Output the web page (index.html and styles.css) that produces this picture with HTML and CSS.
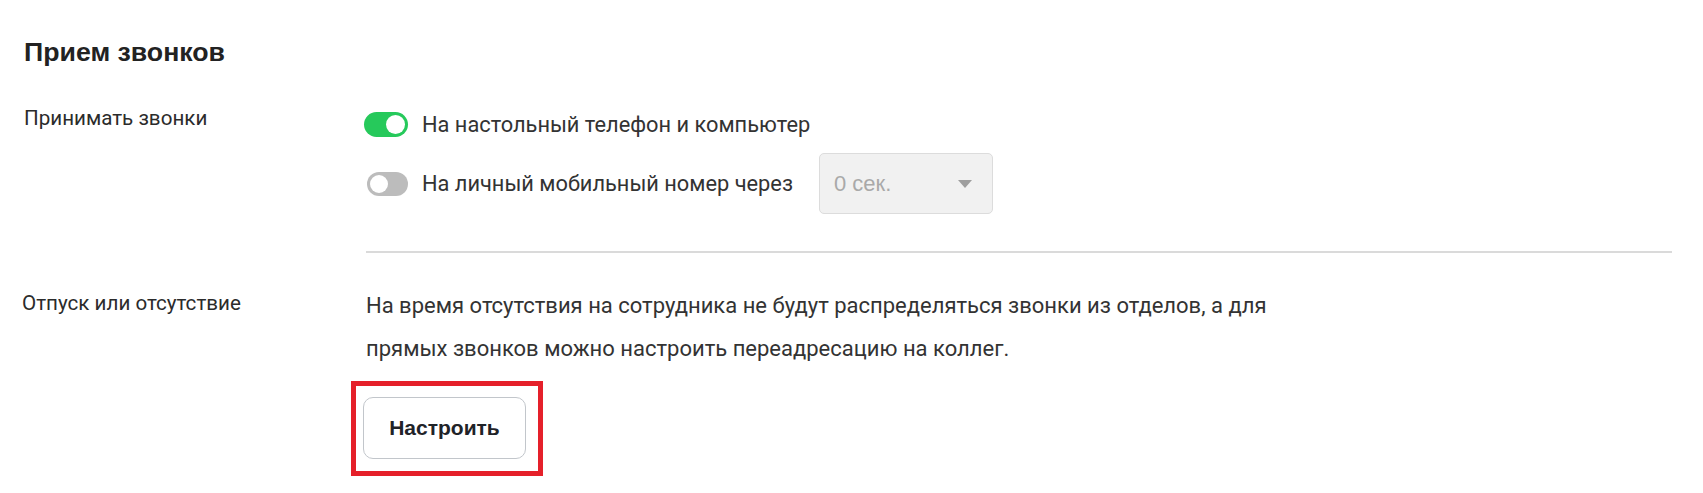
FILE: index.html
```html
<!DOCTYPE html>
<html lang="ru">
<head>
<meta charset="utf-8">
<title>Прием звонков</title>
<link rel="stylesheet" href="styles.css">
</head>
<body>
<section class="panel">
  <h2 class="title">Прием звонков</h2>

  <div class="setting setting-calls">
    <div class="label">Принимать звонки</div>
    <div class="content">
      <div class="option option-first">
        <span class="toggle toggle-on"><span class="knob"></span></span>
        <span class="option-text">На настольный телефон и компьютер</span>
      </div>
      <div class="option option-second">
        <span class="toggle toggle-off"><span class="knob"></span></span>
        <span class="option-text">На личный мобильный номер через</span>
        <div class="select">
          <span class="select-value">0 сек.</span>
          <span class="caret"></span>
        </div>
      </div>
    </div>
  </div>

  <div class="divider-row"><div class="divider"></div></div>

  <div class="setting setting-vacation">
    <div class="label label-vacation">Отпуск или отсутствие</div>
    <div class="content">
      <p class="desc">На время отсутствия на сотрудника не будут распределяться звонки из отделов, а для прямых звонков можно настроить переадресацию на коллег.</p>
      <div class="highlight">
        <button class="btn" type="button">Настроить</button>
      </div>
    </div>
  </div>
</section>
</body>
</html>
```

FILE: styles.css
```css
* { box-sizing: border-box; }

html, body {
  margin: 0;
  padding: 0;
  background: #ffffff;
}

body {
  font-family: Roboto, "Liberation Sans", Arial, sans-serif;
  color: #2e2e2e;
  width: 1703px;
  height: 493px;
  overflow: hidden;
}

.panel {
  padding: 36px 31px 0 24px;
}

.title {
  margin: 0;
  font-family: "Liberation Sans", Arial, sans-serif;
  font-weight: 700;
  font-size: 26.7px;
  line-height: 32px;
  color: #222222;
}

.setting {
  display: grid;
  grid-template-columns: 340px 1fr;
}

.setting-calls {
  margin-top: 36px;
}

.label {
  font-size: 20.6px;
  line-height: 28px;
  color: #2b2b2b;
}

.label-vacation {
  margin-left: -2px;
  margin-top: 5px;
}

.content {
  display: flex;
  flex-direction: column;
  align-items: flex-start;
}

.option {
  display: flex;
  align-items: center;
  gap: 14px;
  font-size: 21.8px;
  color: #333333;
}

.option-first {
  height: 36px;
  margin-top: 2px;
}

.option-second {
  height: 61px;
  margin-top: 11px;
  padding-left: 3px;
}

.toggle {
  position: relative;
  display: inline-block;
  width: 44px;
  height: 25px;
  border-radius: 13px;
  flex: none;
}

.toggle-off {
  width: 41px;
  height: 24px;
}

.toggle-on { background: #26c95b; }
.toggle-off { background: #bcbcbc; }

.knob {
  position: absolute;
  top: 3px;
  width: 19px;
  height: 19px;
  border-radius: 50%;
  background: #ffffff;
}

.toggle-on .knob { right: 3px; }
.toggle-off .knob { left: 3px; width: 18px; height: 18px; }

.select {
  margin-left: 12px;
  width: 174px;
  height: 61px;
  background: #f1f1f1;
  border: 1px solid #dcdcdc;
  border-radius: 5px;
  display: flex;
  align-items: center;
  justify-content: space-between;
  padding: 0 20px 0 14px;
}

.select-value {
  font-family: "Liberation Sans", Arial, sans-serif;
  font-size: 22px;
  color: #a9a9a9;
}

.caret {
  width: 0;
  height: 0;
  border-left: 7.5px solid transparent;
  border-right: 7.5px solid transparent;
  border-top: 8px solid #9e9e9e;
}

.divider-row {
  padding-left: 342px;
  margin-top: 37px;
}

.divider {
  height: 2px;
  background: #dadada;
}

.setting-vacation {
  margin-top: 31px;
}

.setting-vacation .content {
  padding-left: 2px;
}

.desc {
  margin: 0;
  max-width: 940px;
  font-size: 22px;
  line-height: 43px;
  color: #333333;
}

.highlight {
  position: relative;
  margin-top: 27px;
  margin-left: -3px;
}

.highlight::after {
  content: "";
  position: absolute;
  top: -16px;
  left: -12px;
  right: -17px;
  bottom: -17px;
  border: 5px solid #e5202a;
  pointer-events: none;
}

.btn {
  display: block;
  width: 163px;
  height: 62px;
  background: #ffffff;
  border: 1px solid #c2c6cb;
  border-radius: 10px;
  font-family: "Liberation Sans", Arial, sans-serif;
  font-weight: 700;
  font-size: 21px;
  color: #1f2328;
  padding: 0;
  cursor: pointer;
}
```
